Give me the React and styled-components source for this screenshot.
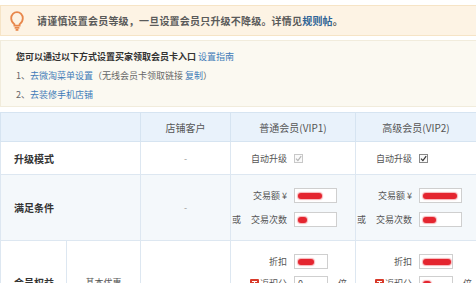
import React from 'react'
import styled, { createGlobalStyle } from 'styled-components'

const GlobalStyle = createGlobalStyle`
  html, body {
    margin: 0;
    padding: 0;
    background: #fff;
    overflow: hidden;
  }
  body {
    font-family: "Noto Sans CJK SC", "Liberation Sans", sans-serif;
    color: #555;
  }
`

const Page = styled.div`
  width: 476px;
  padding-top: 5px;
`

const Banner = styled.div`
  height: 29px;
  display: flex;
  align-items: center;
  padding-left: 9px;
  background: #fdf3e4;
  border: 1px solid #f6e4c6;
  border-right: none;
`

const BannerText = styled.span`
  margin-left: 13px;
  font-size: 10px;
  letter-spacing: 0.2px;
  font-weight: 600;
  color: #5a5a5a;
  white-space: nowrap;
`

const Link = styled.a`
  color: ${p => (p.$dark ? '#2f6496' : '#3f7bb8')};
  font-weight: ${p => (p.$bold ? 600 : 400)};
  text-decoration: none;
`

const InfoBox = styled.div`
  margin-top: 4px;
  padding: 6px 15px 0;
  height: 59px;
  background: #fbf9f1;
  border: 1px solid #f1ecdc;
  border-right: none;
  font-size: 9px;
  line-height: 19px;
  color: #666;
  white-space: nowrap;
`

const InfoTitle = styled.div`
  font-weight: 700;
  color: #333;
`

const Table = styled.table`
  margin-top: 5px;
  width: 476px;
  border-collapse: collapse;
  table-layout: fixed;
  font-size: 9px;
  color: #555;
`

const Th = styled.th`
  height: 28px;
  padding: 0;
  background: #e9f2fb;
  border: 1px solid #d6e4f1;
  font-size: 10px;
  font-weight: 400;
  color: #555;
  text-align: center;
`

const Tr = styled.tr`
  background: ${p => (p.$tint ? '#f4f8fb' : '#fff')};
  height: ${p => p.$h}px;
`

const Td = styled.td`
  padding: 0;
  border: 1px solid #dde7f1;
  text-align: ${p => p.$align || 'left'};
  vertical-align: middle;
`

const RowLabel = styled.td`
  padding: 0 0 0 13px;
  border: 1px solid #dde7f1;
  font-size: 10px;
  font-weight: 700;
  color: #333;
  vertical-align: middle;
`

const Fields = styled.div`
  display: grid;
  grid-template-columns: 56px auto;
  column-gap: 7px;
  row-gap: ${p => p.$gap || 9}px;
  align-items: center;
`

const Label = styled.span`
  text-align: right;
  white-space: nowrap;
  display: flex;
  justify-content: flex-end;
  align-items: center;
  gap: ${p => p.$gap || 1}px;
`

const InputRow = styled.span`
  display: flex;
  align-items: center;
  gap: 10px;
`

const Input = styled.span`
  box-sizing: border-box;
  width: ${p => p.$w || 43}px;
  height: 15px;
  border: 1px solid #cfcfcf;
  background: #fff;
  display: flex;
  align-items: center;
  padding-left: 3px;
`

const Redact = styled.span`
  display: inline-block;
  width: ${p => p.$w}px;
  height: 6px;
  border-radius: 3px;
  background: #e4252f;
  box-shadow: 0 0 1px 1px rgba(228, 37, 47, 0.35);
`

const Check = styled.span`
  box-sizing: border-box;
  width: 9px;
  height: 9px;
  border: 1px solid ${p => (p.$on ? '#888' : '#c8c8c8')};
  background: #fafafa;
  display: inline-flex;
  align-items: center;
  justify-content: center;
`

const Dash = styled.span`
  color: #999;
`

function Bulb() {
  return (
    <svg width="14" height="20" viewBox="0 0 14 20" fill="none" stroke="#e8874c" strokeWidth="1.8">
      <path d="M4.4 13.2 C2.3 11.8 1.2 9.8 1.2 7.3 C1.2 3.9 3.8 1.2 7 1.2 C10.2 1.2 12.8 3.9 12.8 7.3 C12.8 9.8 11.7 11.8 9.6 13.2 L9.6 14.6 L4.4 14.6 Z" />
      <path d="M4.6 16.8 L9.4 16.8" />
      <path d="M5.6 18.9 L8.4 18.9" />
    </svg>
  )
}

function Tick({ on }) {
  return (
    <svg width="7" height="7" viewBox="0 0 7 7" fill="none" stroke={on ? '#333' : '#b5b5b5'} strokeWidth="1.2">
      <path d="M1 3.6 L2.9 5.6 L6.2 1.2" />
    </svg>
  )
}

function PointsIcon() {
  return (
    <svg width="9" height="9" viewBox="0 0 9 9">
      <rect x="0" y="0" width="9" height="9" rx="1" fill="#d83a2a" />
      <path d="M2 2.5 H7 M4.5 2.5 V7.5 M2.5 5 H6.5" stroke="#fff" strokeWidth="1.1" />
    </svg>
  )
}

const tiers = [
  { name: '普通会员(VIP1)', on: false, amount: 24, count: 9, discount: 16, points: 0 },
  { name: '高级会员(VIP2)', on: true, amount: 34, count: 13, discount: 28, points: 8 },
]

export default function App() {
  return (
    <>
      <GlobalStyle />
      <Page>
        <Banner>
          <Bulb />
          <BannerText>
            请谨慎设置会员等级，一旦设置会员只升级不降级。详情见<Link $dark $bold>规则帖</Link>。
          </BannerText>
        </Banner>

        <InfoBox>
          <InfoTitle>
            您可以通过以下方式设置买家领取会员卡入口 <Link>设置指南</Link>
          </InfoTitle>
          <div>
            1、<Link>去微淘菜单设置</Link>（无线会员卡领取链接 <Link>复制</Link>）
          </div>
          <div>
            2、<Link>去装修手机店铺</Link>
          </div>
        </InfoBox>

        <Table>
          <colgroup>
            <col style={{ width: 66 }} />
            <col style={{ width: 74 }} />
            <col style={{ width: 90 }} />
            <col style={{ width: 125 }} />
            <col style={{ width: 121 }} />
          </colgroup>
          <thead>
            <tr>
              <Th colSpan={2}></Th>
              <Th>店铺客户</Th>
              {tiers.map(t => <Th key={t.name}>{t.name}</Th>)}
            </tr>
          </thead>
          <tbody>
            <Tr $h={33}>
              <RowLabel colSpan={2}>升级模式</RowLabel>
              <Td $align="center"><Dash>-</Dash></Td>
              {tiers.map(t => (
                <Td key={t.name}>
                  <Fields>
                    <Label>自动升级</Label>
                    <span><Check $on={t.on}><Tick on={t.on} /></Check></span>
                  </Fields>
                </Td>
              ))}
            </Tr>
            <Tr $h={66} $tint>
              <RowLabel colSpan={2}>满足条件</RowLabel>
              <Td $align="center"><Dash>-</Dash></Td>
              {tiers.map(t => (
                <Td key={t.name}>
                  <Fields>
                    <Label>交易额 ¥</Label>
                    <Input><Redact $w={t.amount} /></Input>
                    <Label $gap={10}><span>或</span><span>交易次数</span></Label>
                    <Input><Redact $w={t.count} /></Input>
                  </Fields>
                </Td>
              ))}
            </Tr>
            <Tr $h={84}>
              <RowLabel>会员权益</RowLabel>
              <Td $align="center">基本优惠</Td>
              <Td $align="center"><Dash>-</Dash></Td>
              {tiers.map(t => (
                <Td key={t.name}>
                  <Fields $gap={7}>
                    <Label>折扣</Label>
                    <Input $w={34}><Redact $w={t.discount} /></Input>
                    <Label><PointsIcon />返积分</Label>
                    <InputRow>
                      <Input $w={34}>{t.points ? <Redact $w={t.points} /> : '0'}</Input>
                      倍
                    </InputRow>
                    <Label>包邮</Label>
                    <span><Check /></span>
                  </Fields>
                </Td>
              ))}
            </Tr>
          </tbody>
        </Table>
      </Page>
    </>
  )
}
